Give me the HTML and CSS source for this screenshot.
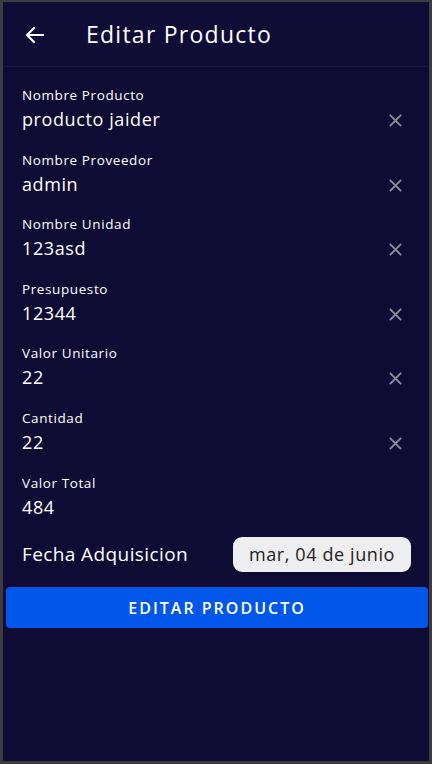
FILE: index.html
```html
<!DOCTYPE html>
<html lang="es">
<head>
<meta charset="utf-8">
<link rel="stylesheet" href="styles.css">
</head>
<body>
<div class="frame">
  <header class="appbar">
    <svg class="back" width="24" height="24" viewBox="0 0 24 24"><path d="M20 12H5M11 5l-7 7 7 7" fill="none" stroke="#fff" stroke-width="2.2" stroke-linecap="round" stroke-linejoin="round"/></svg>
    <h1 class="title">Editar Producto</h1>
  </header>
  <main class="form">
    <div class="field"><div class="text"><div class="label">Nombre Producto</div><div class="value">producto jaider</div></div><svg class="clear" viewBox="0 0 16 16"><path d="M2 2l12 12M14 2L2 14" stroke="#8b8b9a" stroke-width="2" fill="none"/></svg></div>
    <div class="field"><div class="text"><div class="label">Nombre Proveedor</div><div class="value">admin</div></div><svg class="clear" viewBox="0 0 16 16"><path d="M2 2l12 12M14 2L2 14" stroke="#8b8b9a" stroke-width="2" fill="none"/></svg></div>
    <div class="field"><div class="text"><div class="label">Nombre Unidad</div><div class="value">123asd</div></div><svg class="clear" viewBox="0 0 16 16"><path d="M2 2l12 12M14 2L2 14" stroke="#8b8b9a" stroke-width="2" fill="none"/></svg></div>
    <div class="field"><div class="text"><div class="label">Presupuesto</div><div class="value">12344</div></div><svg class="clear" viewBox="0 0 16 16"><path d="M2 2l12 12M14 2L2 14" stroke="#8b8b9a" stroke-width="2" fill="none"/></svg></div>
    <div class="field"><div class="text"><div class="label">Valor Unitario</div><div class="value">22</div></div><svg class="clear" viewBox="0 0 16 16"><path d="M2 2l12 12M14 2L2 14" stroke="#8b8b9a" stroke-width="2" fill="none"/></svg></div>
    <div class="field"><div class="text"><div class="label">Cantidad</div><div class="value">22</div></div><svg class="clear" viewBox="0 0 16 16"><path d="M2 2l12 12M14 2L2 14" stroke="#8b8b9a" stroke-width="2" fill="none"/></svg></div>
    <div class="field"><div class="text"><div class="label">Valor Total</div><div class="value">484</div></div></div>
    <div class="date-row">
      <span class="date-label">Fecha Adquisicion</span>
      <span class="date-chip">mar, 04 de junio</span>
    </div>
  </main>
  <button class="submit">EDITAR PRODUCTO</button>
</div>
</body>
</html>
```
FILE: styles.css
```css
* { box-sizing: border-box; }
html, body { margin: 0; padding: 0; }
body { background: #3b3b40; font-family: "Open Sans", "DejaVu Sans", sans-serif; }
.frame {
  width: 432px; height: 764px;
  border: 3px solid #3b3b40; border-top-width: 2px;
  background: #0e0c34;
  display: flex; flex-direction: column;
}
.appbar {
  height: 65px; display: flex; align-items: center;
  padding-left: 20px;
  border-bottom: 1px solid #1a1940;
  background: #0f0d36;
}
.back { margin-top: 1px; }
.title {
  margin: 0 0 0 39px; color: #fff; font-size: 23px; font-weight: 500;
  letter-spacing: 1.25px;
}
.form { padding: 19px 19px 0 19px; display: flex; flex-direction: column; }
.field { height: 64.6px; display: flex; align-items: flex-start; }
.text { flex: 1; }
.label { color: #fff; font-size: 13.5px; line-height: 18px; letter-spacing: 0.6px; }
.value { color: #fff; font-size: 18px; line-height: 30px; letter-spacing: 0.6px; }
.clear { width: 15px; height: 15px; margin-top: 27px; margin-right: 7px; }
.date-row {
  display: flex; justify-content: space-between; align-items: center;
  margin-top: -4px; height: 40px;
}
.date-label { color: #fff; font-size: 19px; letter-spacing: 0.4px; }
.date-chip {
  background: #eeeef0; color: #222; font-size: 18px; letter-spacing: 0.6px;
  border-radius: 9px; padding: 0 16px; height: 35px; line-height: 35px;
  margin-right: -1px;
}
.submit {
  margin: 13px 1px 0 3px; height: 41px;
  background: #0057ea; color: #fff; border: 0; border-radius: 4px;
  font-family: inherit; font-size: 16px; font-weight: 600; letter-spacing: 2px;
}
```
